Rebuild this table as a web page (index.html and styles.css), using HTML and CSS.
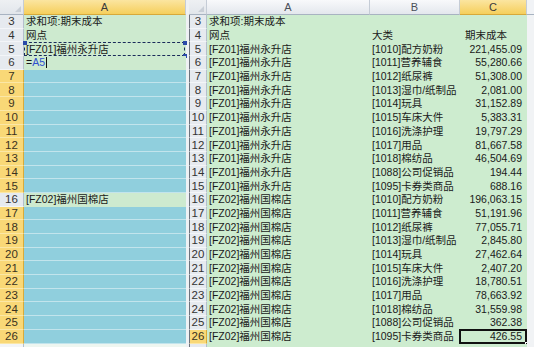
FILE: index.html
```html
<!DOCTYPE html>
<html>
<head>
<meta charset="utf-8">
<link rel="stylesheet" href="styles.css">
</head>
<body>
<div class="screen">
  <div class="pane left">
    <div class="row head"><div class="corner"><span class="tri"></span></div><div class="ch sel">A</div></div>
    <div class="row g"><div class="rh">3</div><div class="c">求和项:期末成本</div></div>
    <div class="row g"><div class="rh">4</div><div class="c">网点</div></div>
    <div class="row g"><div class="rh">5</div><div class="c ants">[FZ01]福州永升店<span class="hd h1"></span><span class="hd h2"></span><span class="hd h3"></span></div></div>
    <div class="row g"><div class="rh">6</div><div class="c">=<span class="ref">A5</span><span class="caret"></span></div></div>
    <div class="row b"><div class="rh sel">7</div><div class="c"></div></div>
    <div class="row b"><div class="rh sel">8</div><div class="c"></div></div>
    <div class="row b"><div class="rh sel">9</div><div class="c"></div></div>
    <div class="row b"><div class="rh sel">10</div><div class="c"></div></div>
    <div class="row b"><div class="rh sel">11</div><div class="c"></div></div>
    <div class="row b"><div class="rh sel">12</div><div class="c"></div></div>
    <div class="row b"><div class="rh sel">13</div><div class="c"></div></div>
    <div class="row b"><div class="rh sel">14</div><div class="c"></div></div>
    <div class="row b"><div class="rh sel">15</div><div class="c"></div></div>
    <div class="row g"><div class="rh">16</div><div class="c">[FZ02]福州国棉店</div></div>
    <div class="row b"><div class="rh sel">17</div><div class="c"></div></div>
    <div class="row b"><div class="rh sel">18</div><div class="c"></div></div>
    <div class="row b"><div class="rh sel">19</div><div class="c"></div></div>
    <div class="row b"><div class="rh sel">20</div><div class="c"></div></div>
    <div class="row b"><div class="rh sel">21</div><div class="c"></div></div>
    <div class="row b"><div class="rh sel">22</div><div class="c"></div></div>
    <div class="row b"><div class="rh sel">23</div><div class="c"></div></div>
    <div class="row b"><div class="rh sel">24</div><div class="c"></div></div>
    <div class="row b"><div class="rh sel">25</div><div class="c"></div></div>
    <div class="row b"><div class="rh sel">26</div><div class="c"></div></div>
    <div class="row w"><div class="rh"></div><div class="c"></div></div>
  </div>
  <div class="divider"></div>
  <div class="pane right">
    <div class="row head"><div class="corner"><span class="tri"></span></div><div class="ch">A</div><div class="ch">B</div><div class="ch sel">C</div><div class="ch end"></div></div>
    <div class="row"><div class="rh">3</div><div class="c">求和项:期末成本</div><div class="c"></div><div class="c"></div><div class="c end"></div></div>
    <div class="row"><div class="rh">4</div><div class="c">网点</div><div class="c">大类</div><div class="c lt">期末成本</div><div class="c end"></div></div>
    <div class="row"><div class="rh">5</div><div class="c">[FZ01]福州永升店</div><div class="c">[1010]配方奶粉</div><div class="c n">221,455.09</div><div class="c end"></div></div>
    <div class="row"><div class="rh">6</div><div class="c">[FZ01]福州永升店</div><div class="c">[1011]营养辅食</div><div class="c n">55,280.66</div><div class="c end"></div></div>
    <div class="row"><div class="rh">7</div><div class="c">[FZ01]福州永升店</div><div class="c">[1012]纸尿裤</div><div class="c n">51,308.00</div><div class="c end"></div></div>
    <div class="row"><div class="rh">8</div><div class="c">[FZ01]福州永升店</div><div class="c">[1013]湿巾/纸制品</div><div class="c n">2,081.00</div><div class="c end"></div></div>
    <div class="row"><div class="rh">9</div><div class="c">[FZ01]福州永升店</div><div class="c">[1014]玩具</div><div class="c n">31,152.89</div><div class="c end"></div></div>
    <div class="row"><div class="rh">10</div><div class="c">[FZ01]福州永升店</div><div class="c">[1015]车床大件</div><div class="c n">5,383.31</div><div class="c end"></div></div>
    <div class="row"><div class="rh">11</div><div class="c">[FZ01]福州永升店</div><div class="c">[1016]洗涤护理</div><div class="c n">19,797.29</div><div class="c end"></div></div>
    <div class="row"><div class="rh">12</div><div class="c">[FZ01]福州永升店</div><div class="c">[1017]用品</div><div class="c n">81,667.58</div><div class="c end"></div></div>
    <div class="row"><div class="rh">13</div><div class="c">[FZ01]福州永升店</div><div class="c">[1018]棉纺品</div><div class="c n">46,504.69</div><div class="c end"></div></div>
    <div class="row"><div class="rh">14</div><div class="c">[FZ01]福州永升店</div><div class="c">[1088]公司促销品</div><div class="c n">194.44</div><div class="c end"></div></div>
    <div class="row"><div class="rh">15</div><div class="c">[FZ01]福州永升店</div><div class="c">[1095]卡券类商品</div><div class="c n">688.16</div><div class="c end"></div></div>
    <div class="row"><div class="rh">16</div><div class="c">[FZ02]福州国棉店</div><div class="c">[1010]配方奶粉</div><div class="c n">196,063.15</div><div class="c end"></div></div>
    <div class="row"><div class="rh">17</div><div class="c">[FZ02]福州国棉店</div><div class="c">[1011]营养辅食</div><div class="c n">51,191.96</div><div class="c end"></div></div>
    <div class="row"><div class="rh">18</div><div class="c">[FZ02]福州国棉店</div><div class="c">[1012]纸尿裤</div><div class="c n">77,055.71</div><div class="c end"></div></div>
    <div class="row"><div class="rh">19</div><div class="c">[FZ02]福州国棉店</div><div class="c">[1013]湿巾/纸制品</div><div class="c n">2,845.80</div><div class="c end"></div></div>
    <div class="row"><div class="rh">20</div><div class="c">[FZ02]福州国棉店</div><div class="c">[1014]玩具</div><div class="c n">27,462.64</div><div class="c end"></div></div>
    <div class="row"><div class="rh">21</div><div class="c">[FZ02]福州国棉店</div><div class="c">[1015]车床大件</div><div class="c n">2,407.20</div><div class="c end"></div></div>
    <div class="row"><div class="rh">22</div><div class="c">[FZ02]福州国棉店</div><div class="c">[1016]洗涤护理</div><div class="c n">18,780.51</div><div class="c end"></div></div>
    <div class="row"><div class="rh">23</div><div class="c">[FZ02]福州国棉店</div><div class="c">[1017]用品</div><div class="c n">78,663.92</div><div class="c end"></div></div>
    <div class="row"><div class="rh">24</div><div class="c">[FZ02]福州国棉店</div><div class="c">[1018]棉纺品</div><div class="c n">31,559.98</div><div class="c end"></div></div>
    <div class="row"><div class="rh">25</div><div class="c">[FZ02]福州国棉店</div><div class="c">[1088]公司促销品</div><div class="c n">362.38</div><div class="c end"></div></div>
    <div class="row"><div class="rh sel">26</div><div class="c">[FZ02]福州国棉店</div><div class="c">[1095]卡券类商品</div><div class="c n active">426.55<span class="fill"></span></div><div class="c end"></div></div>
    <div class="row"><div class="rh"></div><div class="c"></div><div class="c"></div><div class="c"></div><div class="c end"></div></div>
  </div>
</div>
</body>
</html>
```

FILE: styles.css
```css
* { box-sizing: border-box; }
html, body {
  margin: 0;
  padding: 0;
  width: 534px;
  height: 347px;
  overflow: hidden;
  background: #f4f6f8;
}
.screen {
  display: flex;
  width: 534px;
  height: 347px;
  overflow: hidden;
  font-family: "Liberation Sans", "Noto Sans CJK SC", sans-serif;
  font-size: 10.5px;
  color: #1a1a1a;
}
.pane { display: flex; flex-direction: column; }
.left { width: 186px; flex: none; }
.divider { width: 3px; flex: none; background: #eef1f4; }
.right { flex: 1; }
.row { display: grid; height: 13.7px; flex: none; }
.left .row { grid-template-columns: 24px 162px; }
.right .row { grid-template-columns: 18px 163px 90px 67px 1fr; }
.row.head { height: 15px; }

.c {
  display: flex;
  align-items: center;
  padding-left: 2px;
  white-space: nowrap;
  overflow: hidden;
  line-height: 13px;
  position: relative;
}
.corner {
  background: linear-gradient(#eef0f3, #e2e6eb);
  border-right: 1px solid #c5ccd6;
  border-bottom: 1px solid #a8b3c1;
  position: relative;
}
.tri {
  position: absolute;
  right: 2px;
  bottom: 2px;
  width: 0;
  height: 0;
  border-left: 6px solid transparent;
  border-bottom: 6px solid #c9cfd7;
}
.ch {
  display: flex;
  align-items: center;
  justify-content: center;
  font-size: 11px;
  color: #4a4f58;
  background: linear-gradient(#f8f9fb, #e3e7ed);
  border-right: 1px solid #c5ccd6;
  border-bottom: 1px solid #a8b3c1;
}
.ch.sel {
  background: linear-gradient(#fbe5a0, #f5cf5c);
  color: #3b3b3b;
  border-bottom: 1px solid #d7a93a;
}
.ch.end { background: #f1f3f6; border-right: none; }

.rh {
  display: flex;
  align-items: center;
  justify-content: center;
  font-size: 11.5px;
  color: #333;
  background: #e6eaef;
  border-right: 1px solid #b5bfcc;
  border-bottom: 1px solid #f3f5f8;
}
.rh.sel {
  background: #f9d877;
  border-bottom: 1px solid #fbe7a6;
  border-right: 1px solid #d9ab3a;
  color: #3a3220;
}
.right .rh { border-left: 1px solid #6c737d; }

.left .row.g .c { background: #cdeacf; }
.left .row.b .c { background: #90cfdd; border-bottom: 1px solid #c2e4ec; }
.left .row.w .c { background: #eef6f0; }
.left .row.w .rh { background: #f3f5f7; }

.right .row .c { background: #cdeccf; }
.right .row .c.end { background: #f1f3f5; }
.right .row.head .ch.end { background: #f1f3f6; }
.c.n { justify-content: flex-end; padding-right: 5px; }
.c.lt { padding-left: 5px; }

.ref { color: #2e4fcf; }
.caret {
  display: inline-block;
  width: 1px;
  height: 11px;
  background: #111;
  margin-left: 1px;
}
.ants { overflow: visible; }
.ants::before {
  content: "";
  position: absolute;
  left: 0;
  top: 0;
  right: 1px;
  bottom: 0;
  border: 1px dashed #1a2a5a;
  pointer-events: none;
}
.hd {
  position: absolute;
  width: 4px;
  height: 4px;
  background: #2a4aa8;
}
.h1 { left: -1px; top: -1px; }
.h2 { right: -1px; top: -1px; }
.h3 { right: -1px; bottom: -2px; }

.active { overflow: visible; }
.active::before {
  content: "";
  position: absolute;
  left: -1px;
  top: -1px;
  right: 0;
  bottom: 0;
  border: 2px solid #111;
}
.fill {
  position: absolute;
  right: -2px;
  bottom: -2px;
  width: 4px;
  height: 4px;
  background: #111;
  border: 1px solid #fff;
}
```
